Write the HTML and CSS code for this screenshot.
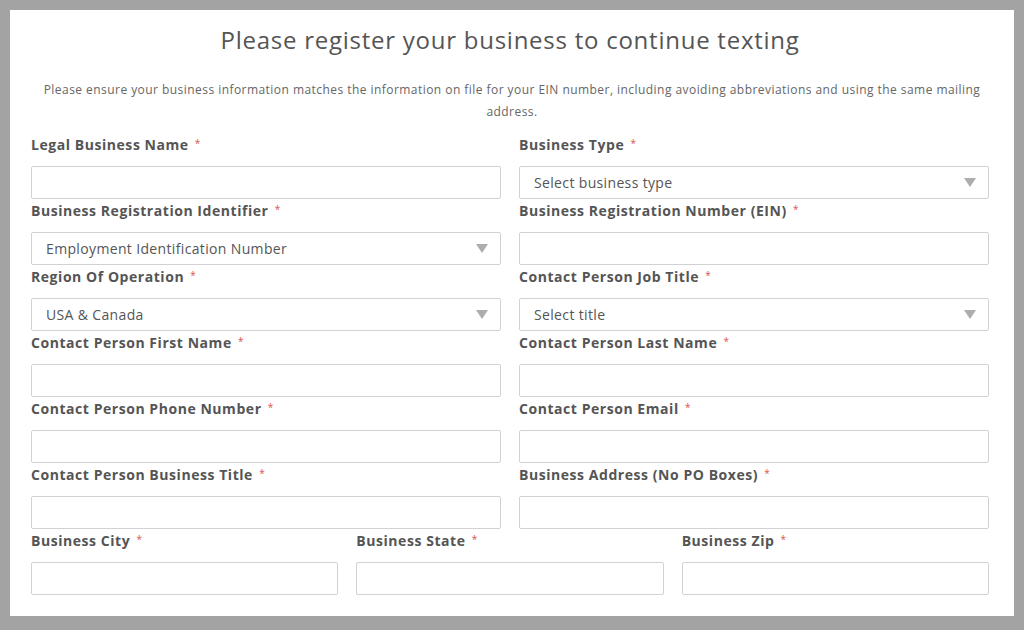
FILE: index.html
```html
<!DOCTYPE html>
<html>
<head>
<meta charset="utf-8">
<link rel="stylesheet" href="styles.css">
</head>
<body>
<div class="card">
  <h1 class="title">Please register your business to continue texting</h1>
  <p class="intro">Please ensure your business information matches the information on file for your EIN number, including avoiding abbreviations and using the same mailing address.</p>
  <div class="grid">
    <div class="field"><label class="label">Legal Business Name <span class="req">*</span></label><div class="input"></div></div>
    <div class="field"><label class="label">Business Type <span class="req">*</span></label><div class="input select"><span>Select business type</span><i class="arrow"></i></div></div>
    <div class="field"><label class="label">Business Registration Identifier <span class="req">*</span></label><div class="input select"><span>Employment Identification Number</span><i class="arrow"></i></div></div>
    <div class="field"><label class="label">Business Registration Number (EIN) <span class="req">*</span></label><div class="input"></div></div>
    <div class="field"><label class="label">Region Of Operation <span class="req">*</span></label><div class="input select"><span>USA &amp; Canada</span><i class="arrow"></i></div></div>
    <div class="field"><label class="label">Contact Person Job Title <span class="req">*</span></label><div class="input select"><span>Select title</span><i class="arrow"></i></div></div>
    <div class="field"><label class="label">Contact Person First Name <span class="req">*</span></label><div class="input"></div></div>
    <div class="field"><label class="label">Contact Person Last Name <span class="req">*</span></label><div class="input"></div></div>
    <div class="field"><label class="label">Contact Person Phone Number <span class="req">*</span></label><div class="input"></div></div>
    <div class="field"><label class="label">Contact Person Email <span class="req">*</span></label><div class="input"></div></div>
    <div class="field"><label class="label">Contact Person Business Title <span class="req">*</span></label><div class="input"></div></div>
    <div class="field"><label class="label">Business Address (No PO Boxes) <span class="req">*</span></label><div class="input"></div></div>
  </div>
  <div class="grid three">
    <div class="field"><label class="label">Business City <span class="req">*</span></label><div class="input"></div></div>
    <div class="field"><label class="label">Business State <span class="req">*</span></label><div class="input"></div></div>
    <div class="field"><label class="label">Business Zip <span class="req">*</span></label><div class="input"></div></div>
  </div>
</div>
</body>
</html>
```

FILE: styles.css
```css
html, body {
  margin: 0;
  padding: 0;
}
body {
  background: #a3a3a3;
  width: 1024px;
  height: 630px;
  padding: 10px 10px 0 10px;
  box-sizing: border-box;
  font-family: "Open Sans", "Lato", sans-serif;
  color: #555;
}
.card {
  background: #fff;
  height: 606px;
  box-sizing: border-box;
  padding: 0 25px 0 21px;
  overflow: hidden;
}
.title {
  margin: 0;
  padding-top: 14px;
  font-size: 24px;
  font-weight: 400;
  line-height: 32px;
  text-align: center;
  color: #555;
  letter-spacing: 0.75px;
}
.intro {
  margin: 23px 0 0;
  font-size: 12px;
  line-height: 22px;
  text-align: center;
  color: #666;
  padding: 0 0 0 4px;
  letter-spacing: 0.45px;
}
.grid {
  display: grid;
  grid-template-columns: 1fr 1fr;
  column-gap: 18px;
  margin-top: 12px;
}
.grid.three {
  grid-template-columns: 1fr 1fr 1fr;
  margin-top: 0;
}
.field {
  display: flex;
  flex-direction: column;
  height: 66px;
}
.label {
  font-size: 14px;
  font-weight: 700;
  line-height: 20px;
  color: #555;
  height: 20px;
  margin-bottom: 11px;
  letter-spacing: 0.55px;
}
.req {
  color: #d9534f;
  font-size: 10px;
  vertical-align: top;
  font-weight: 400;
  margin-left: 2px;
  position: relative;
  top: -2px;
}
.input {
  height: 33px;
  box-sizing: border-box;
  border: 1px solid #d2d2d2;
  border-radius: 2px;
  display: flex;
  align-items: center;
  padding: 0 14px;
  font-size: 14px;
  color: #555;
  letter-spacing: 0.35px;
}
.select {
  justify-content: space-between;
}
.arrow {
  width: 0;
  height: 0;
  border-left: 6px solid transparent;
  border-right: 6px solid transparent;
  border-top: 9px solid #adadad;
  margin-right: -2px;
}
```
